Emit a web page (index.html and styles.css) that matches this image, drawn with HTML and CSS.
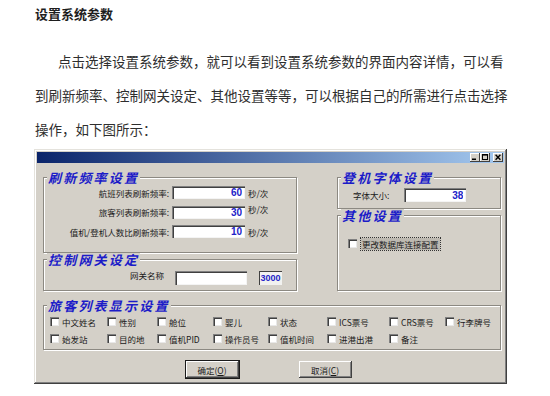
FILE: index.html
```html
<!DOCTYPE html>
<html lang="zh-CN">
<head>
  <meta charset="UTF-8"/>
  <title>设置系统参数</title>
  <link rel="stylesheet" href="styles.css">
</head>
<body>
  <div class="doc">
    <h3 class="doc-title">设置系统参数</h3>
    <p class="doc-text">点击选择设置系统参数，就可以看到设置系统参数的界面内容详情，可以看到刷新频率、控制网关设定、其他设置等等，可以根据自己的所需进行点击选择操作，如下图所示：</p>
  </div>

  <div class="win">
    <div class="win-title">
      <span class="tbtn">
        <svg width="10" height="9" viewBox="0 0 10 9"><rect x="2" y="5.5" width="4" height="1.5" fill="#000"/></svg>
      </span>
      <span class="tbtn">
        <svg width="10" height="9" viewBox="0 0 10 9"><rect x="2.5" y="1.5" width="5" height="5" fill="none" stroke="#000" stroke-width="1"/><rect x="2" y="1" width="6" height="1.6" fill="#000"/></svg>
      </span>
      <span class="tbtn tbtn-close">
        <svg width="10" height="9" viewBox="0 0 10 9"><path d="M2.6 1.8 L7.4 6.8 M7.4 1.8 L2.6 6.8" stroke="#000" stroke-width="1.4"/></svg>
      </span>
    </div>

    <div class="win-body">
      <div class="cols">
        <div class="col">
          <fieldset class="grp grp-rate">
            <legend>刷新频率设置</legend>
            <div class="rate-grid">
              <label>航班列表刷新频率:</label><input class="edit" value="60"><span>秒/次</span>
              <label>旅客列表刷新频率:</label><input class="edit" value="30"><span class="unit-up">秒/次</span>
              <label>值机/登机人数比刷新频率:</label><input class="edit" value="10"><span>秒/次</span>
            </div>
          </fieldset>
          <fieldset class="grp grp-gate">
            <legend>控制网关设定</legend>
            <div class="gate-row">
              <label class="gate-label">网关名称</label>
              <input class="edit gate-name" value="">
              <span class="port">3000</span>
            </div>
          </fieldset>
        </div>

        <div class="col">
          <fieldset class="grp grp-font">
            <legend>登机字体设置</legend>
            <div class="font-row">
              <label>字体大小:</label>
              <input class="edit font-size" value="38">
            </div>
          </fieldset>
          <fieldset class="grp grp-other">
            <legend>其他设置</legend>
            <label class="chk">
              <input type="checkbox"><span class="focus">更改数据库连接配置</span>
            </label>
          </fieldset>
        </div>
      </div>

      <fieldset class="grp grp-cols">
        <legend>旅客列表显示设置</legend>
        <div class="chk-grid">
          <label class="chk"><input type="checkbox"><span>中文姓名</span></label>
          <label class="chk"><input type="checkbox"><span>性别</span></label>
          <label class="chk"><input type="checkbox"><span>舱位</span></label>
          <label class="chk"><input type="checkbox"><span>婴儿</span></label>
          <label class="chk"><input type="checkbox"><span>状态</span></label>
          <label class="chk"><input type="checkbox"><span>ICS票号</span></label>
          <label class="chk"><input type="checkbox"><span>CRS票号</span></label>
          <label class="chk"><input type="checkbox"><span>行李牌号</span></label>
          <label class="chk"><input type="checkbox"><span>始发站</span></label>
          <label class="chk"><input type="checkbox"><span>目的地</span></label>
          <label class="chk"><input type="checkbox"><span>值机PID</span></label>
          <label class="chk"><input type="checkbox"><span>操作员号</span></label>
          <label class="chk"><input type="checkbox"><span>值机时间</span></label>
          <label class="chk"><input type="checkbox"><span>进港出港</span></label>
          <label class="chk"><input type="checkbox"><span>备注</span></label>
        </div>
      </fieldset>

      <div class="btn-row">
        <button class="btn btn-default">确定(<u>O</u>)</button>
        <button class="btn">取消(<u>C</u>)</button>
      </div>
    </div>
  </div>
</body>
</html>
```

FILE: styles.css
```css
body { margin: 0; background: #fff; font-family: "Noto Sans CJK SC", sans-serif; }

.doc { padding-left: 35px; width: 476px; }
.doc-title {
  margin: 4px 0 0; font-size: 13px; line-height: 20px;
  font-weight: bold; color: #1e1e1e;
}
.doc-text {
  margin: 20px 0 0; font-size: 13.5px; line-height: 34px;
  text-indent: 23px; color: #2e2e2e;
}

.win {
  margin: 3px 0 0 34px; width: 473px; box-sizing: border-box;
  padding: 3px; background: #d4d0c8;
  box-shadow: inset -1px -1px #404040, inset 1px 1px #e4e2dc,
              inset -2px -2px #808080, inset 2px 2px #fff;
}
.win-title {
  height: 11px; display: flex; justify-content: flex-end; align-items: center;
  padding-right: 1px;
  background: linear-gradient(to right, #0a246a, #a6caf0);
}
.tbtn {
  width: 10px; height: 9px; display: block; background: #d4d0c8;
  box-shadow: inset -1px -1px #404040, inset 1px 1px #fff;
}
.tbtn svg { display: block; }
.tbtn-close { margin-left: 3px; }

.win-body { padding: 8px 3px 3px 6px; }
.cols { display: grid; grid-template-columns: 254px 164px; column-gap: 40px; }
.col { display: flex; flex-direction: column; }
.grp-gate { margin-top: 2px; }
.grp-other { margin-top: 14px; flex: 1; }

.grp {
  margin: 0; padding: 0; min-width: 0;
  border: 1px solid #8c8982;
  box-shadow: inset 1px 1px #fff, 1px 1px #fff;
  font-size: 8.5px; color: #1a1a1a;
}
.grp legend {
  margin-left: 3px; padding: 0 1px; background: #d4d0c8;
  font-size: 13px; line-height: 13px; font-weight: bold; font-style: italic;
  letter-spacing: 2.2px; color: #1c1cc8;
}

.edit {
  box-sizing: border-box; width: 73px; height: 13px; margin: 0;
  border: 0; padding: 0 3px 0 0; background: #fff;
  box-shadow: inset 1px 1px #808080, inset 2px 2px #404040, inset -1px -1px #f4f4f4;
  font: bold 10px "Liberation Sans", sans-serif; color: #2323c8; text-align: right;
}

.rate-grid {
  display: grid; grid-template-columns: 125px 73px auto;
  column-gap: 3px; row-gap: 6.5px; align-items: center;
  padding: 2px 0 14px;
}
.rate-grid label { justify-self: end; white-space: nowrap; }
.unit-up { margin-top: -6px; }

.gate-row { display: flex; align-items: center; padding: 5px 0 5px 86px; }
.gate-label { margin-top: -6px; }
.gate-name { width: 72px; height: 14px; margin-left: 11px; }
.port {
  margin-left: 12px; width: 23px; height: 14px; box-sizing: border-box;
  background: #f2f2f0; box-shadow: inset 1px 1px #404040;
  font: bold 9px/14px "Liberation Sans", sans-serif; color: #2323c8; text-align: center;
}

.font-row { display: flex; align-items: center; padding: 4px 0 6px 15px; }
.font-size { width: 62px; height: 14px; margin-left: 15px; }

.grp-other .chk { padding: 16px 0 0 10px; }
.focus { background: #bdb9b1; outline: 1px dotted #333; padding: 0 1px; margin-left: 1px; }

.chk { display: flex; align-items: center; height: 11px; white-space: nowrap; }
.chk input {
  appearance: none; width: 9px; height: 9px; margin: 0 3px 0 0; background: #fff;
  box-shadow: inset 1px 1px #808080, inset 2px 2px #404040, inset -1px -1px #e8e8e8;
}
.chk-grid {
  display: grid; grid-template-columns: 57px 50px 56px 55px 59px 62px 56px auto;
  row-gap: 6px; padding: 4px 0 5px 6px;
}
.grp-cols { margin-top: 8px; }

.btn-row { display: flex; justify-content: center; gap: 60px; margin-top: 11px; padding-right: 7px; }
.btn {
  width: 53px; height: 17px; padding: 0; border: 0; background: #d4d0c8;
  font: 8.5px "Noto Sans CJK SC", sans-serif; color: #1a1a1a;
  box-shadow: inset -1px -1px #404040, inset 1px 1px #fff, inset -2px -2px #808080;
}
.btn-default {
  box-shadow: 0 0 0 1px #1a1a1a, inset -1px -1px #404040, inset 1px 1px #fff, inset -2px -2px #808080;
}
```
